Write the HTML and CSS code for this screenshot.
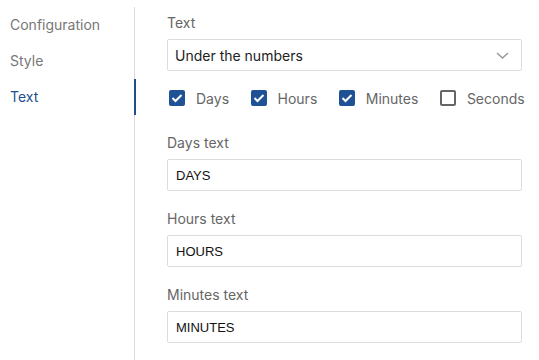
FILE: index.html
```html
<!DOCTYPE html>
<html>
<head>
<meta charset="utf-8">
<link rel="stylesheet" href="styles.css">
</head>
<body>
<div class="layout">
  <nav class="sidebar">
    <div class="nav-item">Configuration</div>
    <div class="nav-item">Style</div>
    <div class="nav-item active">Text</div>
  </nav>
  <main class="content">
    <div class="field">
      <div class="label">Text</div>
      <div class="select">
        <span class="select-value">Under the numbers</span>
        <svg class="chevron" width="13" height="7" viewBox="0 0 13 7"><path d="M1 1 L6.5 6 L12 1" fill="none" stroke="#9a9a9a" stroke-width="1.5"/></svg>
      </div>
    </div>
    <div class="checks">
      <label class="check"><span class="box on"><svg width="12" height="10" viewBox="0 0 12 10"><path d="M1.5 5 L4.5 8 L10.5 2" fill="none" stroke="#fff" stroke-width="2"/></svg></span><span class="check-text">Days</span></label>
      <label class="check"><span class="box on"><svg width="12" height="10" viewBox="0 0 12 10"><path d="M1.5 5 L4.5 8 L10.5 2" fill="none" stroke="#fff" stroke-width="2"/></svg></span><span class="check-text">Hours</span></label>
      <label class="check"><span class="box on"><svg width="12" height="10" viewBox="0 0 12 10"><path d="M1.5 5 L4.5 8 L10.5 2" fill="none" stroke="#fff" stroke-width="2"/></svg></span><span class="check-text">Minutes</span></label>
      <label class="check"><span class="box"></span><span class="check-text">Seconds</span></label>
    </div>
    <div class="field">
      <div class="label">Days text</div>
      <div class="input">DAYS</div>
    </div>
    <div class="field">
      <div class="label">Hours text</div>
      <div class="input">HOURS</div>
    </div>
    <div class="field">
      <div class="label">Minutes text</div>
      <div class="input">MINUTES</div>
    </div>
  </main>
</div>
</body>
</html>
```
FILE: styles.css
```css
* { box-sizing: border-box; }
html, body { margin: 0; background: #fff; }
body { font-family: Inter, "Noto Sans", sans-serif; font-size: 14px; color: #222; }
.layout { display: flex; padding-top: 7px; height: 360px; }
.sidebar { width: 135px; border-right: 1px solid #dcdcdc; flex: none; }
.nav-item { position: relative; height: 36px; line-height: 36px; padding-left: 10px; color: #777; font-size: 14px; }
.nav-item.active { color: #1f4f8f; }
.nav-item.active::after { content: ""; position: absolute; right: -2px; top: 0; width: 2px; height: 36px; background: #1f4f8f; }
.content { flex: 1; min-width: 0; padding: 6px 17px 0 32px; }
.field { margin-bottom: 18px; }
.label { height: 20px; line-height: 20px; color: #666; font-size: 14px; margin-bottom: 6px; }
.select, .input { height: 32px; border: 1px solid #dcdcdc; border-radius: 2px; display: flex; align-items: center; padding: 0 7px; }
.select { justify-content: space-between; padding-right: 12px; }
.select-value { color: #222; font-size: 14px; }
.input { font-family: "Liberation Sans", Arial, sans-serif; font-size: 13px; color: #111; padding-left: 8px; }
.checks { display: flex; align-items: center; height: 24px; margin: -3px 0 23px 2px; gap: 21.5px; white-space: nowrap; }
.check { display: flex; align-items: center; gap: 11px; }
.box { width: 16px; height: 16px; border-radius: 2px; border: 2px solid #666; display: flex; align-items: center; justify-content: center; }
.box.on { background: #1f5294; border-color: #1f5294; }
.check-text { color: #666; font-size: 14px; }
```
